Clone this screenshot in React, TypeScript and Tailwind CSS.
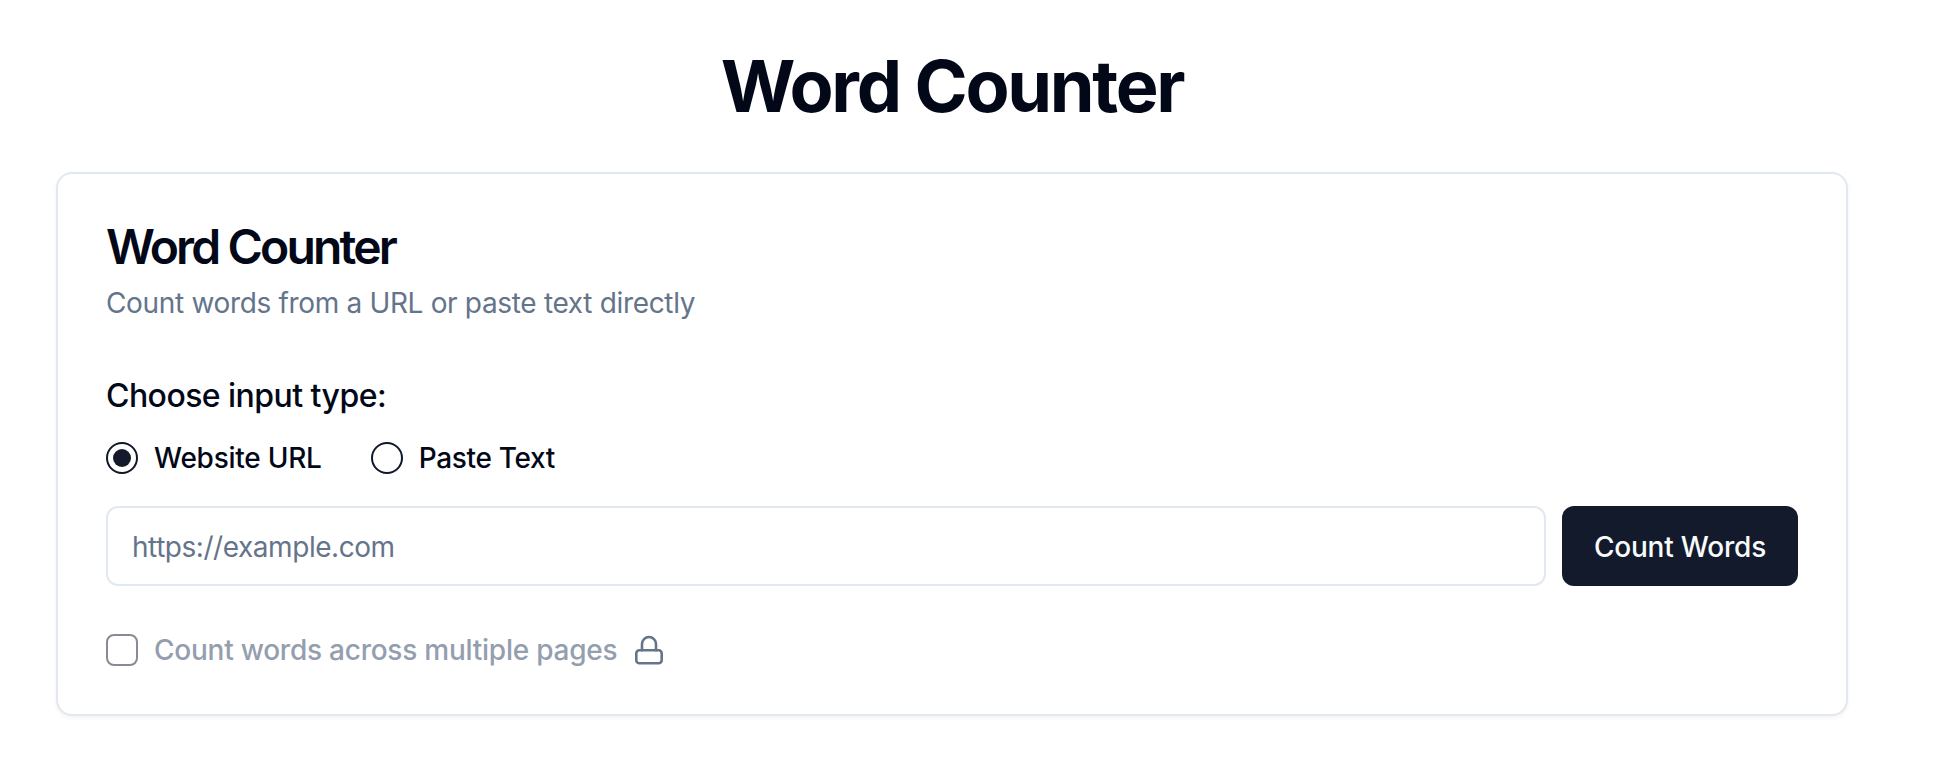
export default function App() {
  return (
    <div className="w-[1904px] min-h-[772px] bg-white px-[56px] pt-[46px] font-['Inter',sans-serif] text-[#020817]">
      <h1 className="text-center text-[72px] leading-[80px] font-bold tracking-[-2.3px] mb-[46px]">Word Counter</h1>
      <div className="w-[1792px] rounded-2xl border-2 border-[#e2e8f0] bg-white shadow-[0_2px_4px_0_rgba(0,0,0,0.05)] px-[48px] pt-[49px] pb-[44px]">
        <h2 className="text-[48px] leading-[48px] font-semibold tracking-[-2.85px]">Word Counter</h2>
        <p className="mt-3 text-[28px] leading-[40px] tracking-[-0.33px] text-[#64748b]">Count words from a URL or paste text directly</p>
        <div className="mt-[47px] text-[32px] leading-[52px] font-medium tracking-[-0.55px]">Choose input type:</div>
        <div className="mt-[16px] flex items-center gap-[49px]">
          <label className="flex items-center gap-4">
            <span className="flex size-8 items-center justify-center rounded-full border-2 border-[#0f172a]">
              <span className="size-[18px] rounded-full bg-[#141a2c]"></span>
            </span>
            <span className="text-[28px] leading-[40px] font-medium tracking-[-0.25px]">Website URL</span>
          </label>
          <label className="flex items-center gap-4">
            <span className="size-8 rounded-full border-2 border-[#0f172a]"></span>
            <span className="text-[28px] leading-[40px] font-medium tracking-[-0.33px]">Paste Text</span>
          </label>
        </div>
        <div className="mt-[28px] flex gap-4">
          <input
            className="h-[80px] flex-1 rounded-xl border-2 border-[#e2e8f0] bg-white px-6 pt-[2px] text-[28px] tracking-[-0.45px] text-[#020817] outline-none placeholder:text-[#64748b]"
            placeholder="https://example.com"
          />
          <button className="h-[80px] w-[236px] rounded-xl bg-[#131a2b] pt-[1px] text-[28px] font-medium tracking-[-0.2px] text-[#f8fafc]">Count Words</button>
        </div>
        <div className="mt-[44px] flex items-center gap-4">
          <span className="size-8 rounded-lg border-2 border-[#0f172a] opacity-50"></span>
          <span className="text-[28px] leading-[40px] font-medium tracking-[-0.24px] text-[#949eae]">Count words across multiple pages</span>
          <svg width="28" height="30" viewBox="0 0 28 30" fill="none" stroke="#64748b" strokeWidth="2.6" strokeLinecap="round" strokeLinejoin="round" className="ml-[2px]">
            <rect x="1.3" y="15.3" width="25.4" height="12.9" rx="3" />
            <path d="M7 15.3V9a7 7 0 0 1 14 0v6.3" />
          </svg>
        </div>
      </div>
    </div>
  );
}
